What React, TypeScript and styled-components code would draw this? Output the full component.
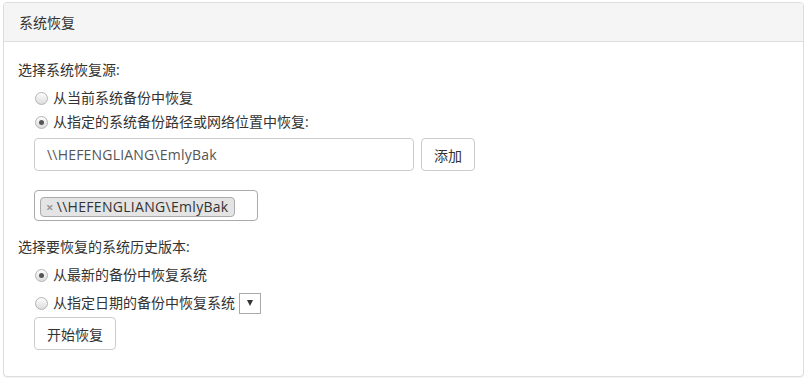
import styled, { createGlobalStyle } from 'styled-components';

const GlobalStyle = createGlobalStyle`
  html, body {
    margin: 0;
    padding: 0;
    background: #fff;
  }
  body {
    font-family: "Open Sans", "Noto Sans CJK SC", sans-serif;
    font-size: 14px;
    color: #333;
  }
`;

export default function App() {
  return (
    <>
      <GlobalStyle />
      <Panel>
        <PanelHeader>系统恢复</PanelHeader>
        <PanelBody>
          <SectionLabel>选择系统恢复源:</SectionLabel>
          <Indent>
            <RadioRow>
              <Radio $checked={false} />
              从当前系统备份中恢复
            </RadioRow>
            <RadioRow>
              <Radio $checked />
              从指定的系统备份路径或网络位置中恢复:
            </RadioRow>
            <PathRow>
              <TextInput value={'\\\\HEFENGLIANG\\EmlyBak'} readOnly />
              <Button>添加</Button>
            </PathRow>
            <TagBox>
              <Tag>
                <TagRemove>×</TagRemove>
                {'\\\\HEFENGLIANG\\EmlyBak'}
              </Tag>
            </TagBox>
          </Indent>
          <SectionLabel $spaced>选择要恢复的系统历史版本:</SectionLabel>
          <Indent>
            <RadioRow>
              <Radio $checked />
              从最新的备份中恢复系统
            </RadioRow>
            <RadioRow $tall>
              <Radio $checked={false} />
              从指定日期的备份中恢复系统
              <DateSelect>
                <Caret />
              </DateSelect>
            </RadioRow>
            <StartRow>
              <Button>开始恢复</Button>
            </StartRow>
          </Indent>
        </PanelBody>
      </Panel>
    </>
  );
}

const Panel = styled.div`
  margin: 2px 2px 2px 3px;
  border: 1px solid #ddd;
  border-radius: 4px;
  background: #fff;
  box-shadow: 0 1px 1px rgba(0, 0, 0, 0.05);
  height: 375px;
  box-sizing: border-box;
`;

const PanelHeader = styled.div`
  height: 39px;
  box-sizing: border-box;
  padding: 10px 15px;
  line-height: 20px;
  background: #f5f5f5;
  border-bottom: 1px solid #ddd;
  border-radius: 3px 3px 0 0;
`;

const PanelBody = styled.div`
  padding: 18px 15px 0 14px;
`;

const SectionLabel = styled.div<{ $spaced?: boolean }>`
  line-height: 20px;
  margin-top: ${(p) => (p.$spaced ? '16px' : '0')};
  margin-bottom: 6px;
`;

const Indent = styled.div`
  padding-left: 16px;
`;

const RadioRow = styled.div<{ $tall?: boolean }>`
  display: flex;
  align-items: center;
  height: 24px;
  line-height: 20px;
  margin-top: ${(p) => (p.$tall ? '4px' : '0')};
`;

const Radio = styled.span<{ $checked: boolean }>`
  position: relative;
  width: 11px;
  height: 11px;
  margin: 0 5px 0 1px;
  border-radius: 50%;
  border: 1px solid #b4b4b4;
  background: linear-gradient(#fdfdfd, #dcdcdc);
  flex-shrink: 0;

  &::after {
    content: '';
    display: ${(p) => (p.$checked ? 'block' : 'none')};
    position: absolute;
    left: 3px;
    top: 3px;
    width: 5px;
    height: 5px;
    border-radius: 50%;
    background: #555;
  }
`;

const PathRow = styled.div`
  display: flex;
  gap: 7px;
  margin-top: 4px;
`;

const TextInput = styled.input`
  width: 380px;
  height: 33px;
  box-sizing: border-box;
  padding: 0 12px;
  border: 1px solid #ccc;
  border-radius: 4px;
  font: inherit;
  letter-spacing: 0.2px;
  color: #555;
  outline: none;
`;

const Button = styled.button`
  height: 33px;
  padding: 0 12px;
  border: 1px solid #ccc;
  border-radius: 4px;
  background: #fff;
  font: inherit;
  color: #333;
`;

const TagBox = styled.div`
  margin-top: 19px;
  width: 224px;
  height: 31px;
  box-sizing: border-box;
  padding: 6px 5px;
  border: 1px solid #aaa;
  border-radius: 4px;
`;

const Tag = styled.span`
  display: inline-flex;
  align-items: center;
  height: 20px;
  box-sizing: border-box;
  padding: 0 5px;
  background: #e4e4e4;
  border: 1px solid #aaa;
  border-radius: 4px;
  line-height: 18px;
  letter-spacing: 0.3px;
  color: #333;
`;

const TagRemove = styled.span`
  color: #999;
  font-weight: bold;
  margin-right: 3px;
  font-size: 13px;
`;

const DateSelect = styled.span`
  display: inline-flex;
  align-items: center;
  justify-content: center;
  width: 22px;
  height: 21px;
  margin-left: 4px;
  border: 1px solid #a9a9a9;
  box-sizing: border-box;
  background: #fff;
`;

const Caret = styled.span`
  width: 0;
  height: 0;
  border-left: 3.5px solid transparent;
  border-right: 3.5px solid transparent;
  border-top: 6px solid #333;
`;

const StartRow = styled.div`
  margin-top: 2px;
`;
